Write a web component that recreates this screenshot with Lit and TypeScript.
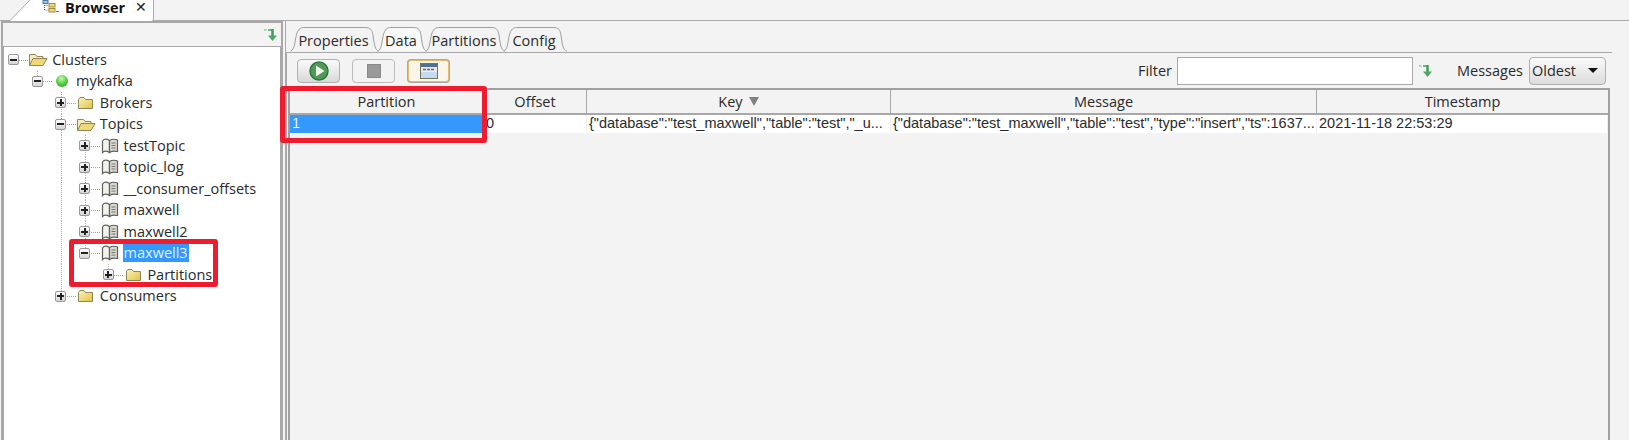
import { css, html, LitElement, svg } from "lit";
import { customElement } from "lit/decorators.js";

type Icon = "open" | "folder" | "ball" | "book";
interface Row {
  label: string;
  icon: Icon;
  depth: number;
  open: boolean;
  guides: number[]; // columns that carry a full vertical line
  up?: boolean;
  down?: boolean;
  selected?: boolean;
}

const ROWS: Row[] = [
  { label: "Clusters", icon: "open", depth: 0, open: true, guides: [] },
  { label: "mykafka", icon: "ball", depth: 1, open: true, guides: [], up: true },
  { label: "Brokers", icon: "folder", depth: 2, open: false, guides: [], up: true, down: true },
  { label: "Topics", icon: "open", depth: 2, open: true, guides: [], up: true, down: true },
  { label: "testTopic", icon: "book", depth: 3, open: false, guides: [2], up: true, down: true },
  { label: "topic_log", icon: "book", depth: 3, open: false, guides: [2], up: true, down: true },
  { label: "__consumer_offsets", icon: "book", depth: 3, open: false, guides: [2], up: true, down: true },
  { label: "maxwell", icon: "book", depth: 3, open: false, guides: [2], up: true, down: true },
  { label: "maxwell2", icon: "book", depth: 3, open: false, guides: [2], up: true, down: true },
  { label: "maxwell3", icon: "book", depth: 3, open: true, guides: [2], up: true, selected: true },
  { label: "Partitions", icon: "folder", depth: 4, open: false, guides: [2], up: true },
  { label: "Consumers", icon: "folder", depth: 2, open: false, guides: [], up: true },
];

const TABS = [
  { label: "Properties", width: 87 },
  { label: "Data", width: 48, active: true },
  { label: "Partitions", width: 78 },
  { label: "Config", width: 62 },
];

const COLUMNS = [
  { label: "Partition", width: 194, value: "1", selected: true },
  { label: "Offset", width: 103, value: "0" },
  { label: "Key", width: 304, sort: true, value: '{"database":"test_maxwell","table":"test","_u...' },
  { label: "Message", width: 426, value: '{"database":"test_maxwell","table":"test","type":"insert","ts":1637...' },
  { label: "Timestamp", width: 291, value: "2021-11-18 22:53:29" },
];

const arrow = html`<svg width="14" height="14" viewBox="0 0 14 14">
  <path d="M0 2h2.500" stroke="#a9d8b4" stroke-width="2" fill="none" />
  <path d="M4 2h4" stroke="#6fb985" stroke-width="2" fill="none" />
  <path d="M8.500 1v8" stroke="#3f9c58" stroke-width="2.500" fill="none" />
  <path d="M4 7.500 8.500 13 13 7.500z" fill="#4fa564" />
</svg>`;

function treeIcon(kind: Icon) {
  if (kind === "ball") {
    return html`<svg width="14" height="14" viewBox="0 0 14 14">
      <defs>
        <radialGradient id="ball" cx=".45" cy=".3" r=".8">
          <stop offset="0" stop-color="#c8f7b4" />
          <stop offset=".5" stop-color="#5fd34a" />
          <stop offset="1" stop-color="#2c9a2a" />
        </radialGradient>
      </defs>
      <circle cx="7" cy="7" r="6" fill="url(#ball)" />
    </svg>`;
  }
  if (kind === "book") {
    return html`<svg width="18" height="16" viewBox="0 0 18 16">
      <path d="M1.500 3C3 1 6 1 8.500 2.500V14.500C6 13 3 13 1.500 14.500z" fill="#f2f2ee" stroke="#5f5f58" stroke-width="1.200" />
      <path d="M8.500 2.500C11 1 14 1 16.500 2V13.500C14 13 11 13 8.500 14.500z" fill="#d8d9d2" stroke="#5f5f58" stroke-width="1.200" />
      <path d="M10.500 5h4M10.500 7.500h4M10.500 10h4" stroke="#74746d" fill="none" />
    </svg>`;
  }
  if (kind === "open") {
    return html`<svg width="20" height="15" viewBox="0 0 20 15">
      <path d="M1.500 13.500V2.500h6l1.500 2h6v2" fill="#f8eebc" stroke="#918558" />
      <path d="M1.500 13.500 5 6.500h14l-4 7z" fill="#f0d878" stroke="#918558" stroke-linejoin="round" />
    </svg>`;
  }
  return html`<svg width="17" height="14" viewBox="0 0 17 14">
    <defs>
      <linearGradient id="fold" x1="0" y1="0" x2="1" y2="1">
        <stop offset="0" stop-color="#fbf3c0" />
        <stop offset="1" stop-color="#e3c23e" />
      </linearGradient>
    </defs>
    <path d="M1.500 12.500V3.500l1.500-2h4l1.500 2h7v9z" fill="url(#fold)" stroke="#8f8658" />
  </svg>`;
}

function tabPath(w: number) {
  return svg`<path d="M.5 25C5 25 5 12 7 7 9 2 11 1.500 15 1.500H${w - 12}C${w - 6} 1.500 ${w - 5} 4 ${w - 4} 9 ${w - 3} 17 ${w - 2} 25 ${w + 2} 25" />`;
}

@customElement("app-root")
export class AppRoot extends LitElement {
  private renderRow(r: Row) {
    const cols = [];
    for (let i = 0; i < r.depth; i++) {
      cols.push(html`<span class="col ${r.guides.includes(i) ? "line" : ""}"></span>`);
    }
    return html`<div class="row">
      ${cols}
      <span class="col own ${r.up ? "up" : ""} ${r.down ? "down" : ""}">
        <span class="hook"></span>
        <span class="toggle">${r.open ? "" : html`<i></i>`}</span>
      </span>
      <span class="ico">${treeIcon(r.icon)}</span>
      <span class="label ${r.selected ? "sel" : ""}">${r.label}</span>
    </div>`;
  }

  render() {
    return html`
      <div class="top">
        <div class="topline"></div>
        <div class="browser-tab">
          <svg class="slant" width="21" height="21" viewBox="0 0 21 21">
            <path d="M0 21 20 0H21V21z" fill="#fff" />
            <path d="M0 20.500 20 0" stroke="#aaa" fill="none" />
          </svg>
          <div class="tab-body">
            <svg width="18" height="14" viewBox="0 0 18 14">
              <path d="M2.500 3v7h4M2.500 5.500h4" stroke="#777" fill="none" stroke-dasharray="1 1" />
              <rect x="1" y=".5" width="5" height="3" fill="#9cc4e4" stroke="#4a78a8" />
              <rect x="7" y="3.500" width="6" height="3.500" fill="#f3d87b" stroke="#a08a3c" />
              <rect x="7" y="8.500" width="6" height="3.500" fill="#f3d87b" stroke="#a08a3c" />
              <path d="M14 11.500h3" stroke="#4a78a8" />
            </svg>
            <b>Browser</b>
            <span class="close">✕</span>
          </div>
        </div>
      </div>
      <div class="main">
        <section class="left">
          <div class="left-bar">${arrow}</div>
          <div class="tree">
            <div class="rows">${ROWS.map((r) => this.renderRow(r))}</div>
            <div class="mark tree-mark"></div>
          </div>
        </section>
        <section class="right">
          <div class="tabs">
            ${TABS.map(
              (t) => html`<div class="tab ${t.active ? "active" : ""}" style="width:${t.width}px">
                <svg width=${t.width + 3} height="26" viewBox="0 0 ${t.width + 3} 26">${tabPath(t.width)}</svg>
                <span>${t.label}</span>
              </div>`
            )}
          </div>
          <div class="panel">
            <div class="toolbar">
              <button class="btn">
                <svg width="22" height="22" viewBox="0 0 22 22">
                  <circle cx="11" cy="11" r="9" fill="#4f9a55" stroke="#2f7a3a" stroke-width="1.500" />
                  <path d="M8 5.500 16.500 11 8 16.500z" fill="#f2f7ee" />
                </svg>
              </button>
              <button class="btn stop"><i></i></button>
              <button class="btn on">
                <svg width="18" height="16" viewBox="0 0 18 16">
                  <rect x=".5" y=".5" width="17" height="15" fill="#dfeaf6" stroke="#77745c" />
                  <rect x="1" y="1" width="16" height="3" fill="#4f6f96" />
                  <rect x="1" y="4" width="16" height="5" fill="#e9e9ee" />
                  <path d="M3 6.500h3M7 6.500h3M11 6.500h3" stroke="#667" stroke-width="1.500" />
                  <rect x="1" y="9" width="16" height="6" fill="#c4dcf3" />
                </svg>
              </button>
              <span class="spacer"></span>
              <label>Filter</label>
              <input class="filter" />
              <span class="filter-go">${arrow}</span>
              <label class="msg">Messages</label>
              <div class="select"><span>Oldest</span><i></i></div>
            </div>
            <div class="table">
              <div class="thead">
                ${COLUMNS.map(
                  (c) => html`<div class="th" style="width:${c.width}px">
                    ${c.label}${c.sort ? html`<i class="sort"></i>` : ""}
                  </div>`
                )}
              </div>
              <div class="tbody">
                ${COLUMNS.map(
                  (c) => html`<div class="td ${c.selected ? "sel" : ""}" style="width:${c.width}px">${c.value}</div>`
                )}
              </div>
              <div class="mark table-mark"></div>
            </div>
          </div>
        </section>
      </div>
    `;
  }

  static styles = css`
    :host {
      display: block;
      width: 1629px;
      height: 440px;
      overflow: hidden;
      background: #f3f3f3;
      font-family: "Open Sans", "Noto Sans", sans-serif;
      font-size: 14.500px;
      color: #2a2a2a;
    }

    .top {
      position: relative;
      height: 21px;
      display: flex;
      padding-left: 10px;
    }

    .topline {
      position: absolute;
      left: 0;
      right: 0;
      bottom: 0;
      height: 1px;
      background: #aaa;
    }

    .browser-tab {
      position: relative;
      display: flex;
      height: 21px;
    }

    .tab-body {
      width: 123px;
      height: 26px;
      margin-top: -5px;
      padding: 0 0 2px 11px;
      box-sizing: border-box;
      background: #fff;
      border-right: 1px solid #aaa;
      border-bottom-right-radius: 3px;
      display: flex;
      align-items: center;
    }

    .tab-body b {
      margin-left: 5px;
      font-weight: 700;
      color: #111;
    }

    .close {
      margin-left: 10px;
      font-size: 14px;
      font-weight: 700;
      font-family: "DejaVu Sans", sans-serif;
      color: #222;
    }

    .main {
      display: flex;
      height: 419px;
    }

    .left {
      width: 282px;
      margin-left: 1px;
      border: solid #a8a8a8;
      border-width: 2px 2px 0 2px;
      box-sizing: border-box;
      display: flex;
      flex-direction: column;
    }

    .left-bar {
      height: 23px;
      display: flex;
      justify-content: flex-end;
      align-items: center;
      padding-right: 3px;
    }

    .tree {
      flex: 1;
      position: relative;
      background: #fff;
      border: solid #a8a8a8;
      border-width: 1px 1px 0 1px;
      padding-top: 2px;
    }

    .row {
      display: flex;
      align-items: center;
      height: 21.500px;
      margin-left: -2.600px;
    }

    .col {
      position: relative;
      flex: none;
      width: 23.800px;
      height: 100%;
      display: flex;
      align-items: center;
      justify-content: center;
    }

    .col.line::before,
    .col.up::before,
    .col.down::after {
      content: "";
      position: absolute;
      left: 50%;
      width: 1px;
      background: linear-gradient(#b4b4b4 50%, transparent 0) 0 0 / 1px 2px repeat-y;
    }

    .col.line::before {
      top: 0;
      bottom: 0;
    }

    .col.up::before {
      top: 0;
      height: 50%;
    }

    .col.down::after {
      top: 50%;
      bottom: 0;
    }

    .hook {
      position: absolute;
      left: 50%;
      right: -3px;
      top: 50%;
      height: 1px;
      background: linear-gradient(90deg, #a0a0a0 50%, transparent 0) 0 0 / 2px 1px repeat-x;
    }

    .toggle {
      position: relative;
      z-index: 1;
      width: 9px;
      height: 9px;
      border: 1px solid #999;
      border-radius: 2px;
      background: linear-gradient(#fff, #d4d4d4);
    }

    .toggle::before {
      content: "";
      position: absolute;
      left: 1px;
      right: 1px;
      top: 3.500px;
      height: 2px;
      background: #222;
    }

    .toggle i {
      position: absolute;
      top: 1px;
      bottom: 1px;
      left: 3.500px;
      width: 2px;
      background: #222;
    }

    .ico {
      flex: none;
      width: 22px;
      margin-left: 2px;
      display: flex;
      align-items: center;
      justify-content: center;
    }

    .label {
      margin-left: 2px;
      padding: 0 1px;
      line-height: 18px;
      white-space: nowrap;
    }

    .label.sel {
      background: #3399ff;
      color: #dff0ff;
    }

    .mark {
      position: absolute;
      border: 5px solid #ee1c2e;
      border-radius: 3px;
      box-sizing: border-box;
      pointer-events: none;
    }

    .tree-mark {
      left: 65px;
      top: 192px;
      width: 149px;
      height: 48px;
    }

    .right {
      flex: 1;
      margin-left: 2px;
      min-width: 0;
      border-left: 1px solid #a8a8a8;
    }

    .tabs {
      display: flex;
      height: 31px;
      padding: 5px 0 0 4px;
      box-sizing: border-box;
    }

    .tab {
      position: relative;
      height: 26px;
      padding-top: 3px;
      box-sizing: border-box;
      display: flex;
      align-items: center;
      justify-content: center;
    }

    .tab svg {
      position: absolute;
      left: 0;
      top: 0;
      fill: #f3f3f3;
      stroke: #9f9f9f;
    }

    .tab.active svg {
      fill: #f8f8f8;
    }

    .tab span {
      position: relative;
    }

    .panel {
      width: 1326px;
      box-sizing: border-box;
      border: solid #a8a8a8;
      border-width: 1px 0 0 1px;
      position: relative;
    }

    .toolbar {
      height: 35px;
      display: flex;
      align-items: center;
      padding: 0 6px 0 10px;
    }

    .btn {
      width: 43px;
      height: 24px;
      padding: 0;
      margin-right: 12px;
      display: flex;
      align-items: center;
      justify-content: center;
      border: 1px solid #b0b0b0;
      border-radius: 4px;
      background: linear-gradient(#fbfbfb, #d8d8d8);
    }

    .btn.stop {
      background: #f3f3f3;
      border-color: #bdbdbd;
    }

    .btn.stop i {
      width: 12px;
      height: 12px;
      background: #9a9a9a;
      border: 1px solid #8a8a8a;
    }

    .btn.on {
      background: #faf6ea;
      border: 2px solid #e3bd74;
      outline: 1px solid #a9a9a0;
      outline-offset: -1px;
    }

    .spacer {
      flex: 1;
    }

    .filter {
      width: 236px;
      height: 28px;
      box-sizing: border-box;
      border: 1px solid #a8a8a8;
      background: #fff;
      margin: 0 0 0 5px;
      padding: 0;
    }

    .filter-go {
      display: flex;
      margin-left: 6px;
    }

    .msg {
      margin-left: 24px;
    }

    .select {
      width: 77px;
      height: 28px;
      box-sizing: border-box;
      margin-left: 6px;
      border: 1px solid #b0b0b0;
      border-radius: 4px;
      background: linear-gradient(#fafafa, #dcdcdc);
      display: flex;
      align-items: center;
      justify-content: space-between;
      padding: 0 7px 0 2px;
    }

    .select i {
      border: 5px solid transparent;
      border-top: 5px solid #111;
      border-bottom: 0;
    }

    .table {
      position: relative;
      margin-left: 1px;
      width: 1322px;
      height: 352px;
      border: solid #a0a0a0;
      border-width: 2px 2px 0 2px;
      box-sizing: border-box;
    }

    .thead,
    .tbody {
      display: flex;
    }

    .th {
      flex: none;
      box-sizing: border-box;
      height: 25px;
      border-right: 1px solid #a8a8a8;
      border-bottom: 2px solid #a8a8a8;
      display: flex;
      align-items: center;
      justify-content: center;
    }

    .th:last-child {
      border-right: 0;
    }

    .sort {
      margin-left: 6px;
      border: 5px solid transparent;
      border-top: 9px solid #808080;
      border-bottom: 0;
    }

    .tbody {
      background: #fff;
      height: 18px;
    }

    .td {
      flex: none;
      box-sizing: border-box;
      padding-left: 2px;
      font-family: "Liberation Sans", Arial, sans-serif;
      font-size: 14.500px;
      line-height: 17px;
      white-space: nowrap;
      overflow: hidden;
      border-right: 1px solid #f0f0f0;
    }

    .td.sel {
      background: #3399ff;
      color: #eaf4ff;
    }

    .table-mark {
      left: -10px;
      top: -4px;
      width: 207px;
      height: 57px;
    }
  `;
}
